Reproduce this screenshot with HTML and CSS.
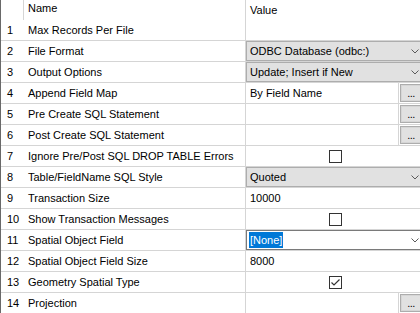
FILE: index.html
```html
<!DOCTYPE html>
<html lang="en">
<head>
    <meta charset="UTF-8">
    <title>Writer Parameters</title>
    <link rel="stylesheet" href="styles.css">
</head>
<body>
<div class="grid">
    <div class="row head">
        <div class="num"></div>
        <div class="name">Name</div>
        <div class="val"><span class="txt">Value</span></div>
    </div>

    <div class="row">
        <div class="num">1</div>
        <div class="name">Max Records Per File</div>
        <div class="val"></div>
    </div>
    <div class="row">
        <div class="num">2</div>
        <div class="name">File Format</div>
        <div class="val">
            <div class="combo"><span class="label">ODBC Database (odbc:)</span>
                <svg width="8" height="5" viewBox="0 0 8 5"><path d="M0.5 0.5 L4 4 L7.5 0.5" fill="none" stroke="#5a5a5a" stroke-width="1"/></svg>
            </div>
        </div>
    </div>
    <div class="row">
        <div class="num">3</div>
        <div class="name">Output Options</div>
        <div class="val">
            <div class="combo"><span class="label">Update; Insert if New</span>
                <svg width="8" height="5" viewBox="0 0 8 5"><path d="M0.5 0.5 L4 4 L7.5 0.5" fill="none" stroke="#5a5a5a" stroke-width="1"/></svg>
            </div>
        </div>
    </div>
    <div class="row">
        <div class="num">4</div>
        <div class="name">Append Field Map</div>
        <div class="val">
            <span class="txt edit">By Field Name</span>
            <div class="dots">...</div>
        </div>
    </div>
    <div class="row">
        <div class="num">5</div>
        <div class="name">Pre Create SQL Statement</div>
        <div class="val">
            <span class="txt edit"></span>
            <div class="dots">...</div>
        </div>
    </div>
    <div class="row">
        <div class="num">6</div>
        <div class="name">Post Create SQL Statement</div>
        <div class="val">
            <span class="txt edit"></span>
            <div class="dots">...</div>
        </div>
    </div>
    <div class="row">
        <div class="num">7</div>
        <div class="name">Ignore Pre/Post SQL DROP TABLE Errors</div>
        <div class="val center"><div class="chk"></div></div>
    </div>
    <div class="row">
        <div class="num">8</div>
        <div class="name">Table/FieldName SQL Style</div>
        <div class="val">
            <div class="combo"><span class="label">Quoted</span>
                <svg width="8" height="5" viewBox="0 0 8 5"><path d="M0.5 0.5 L4 4 L7.5 0.5" fill="none" stroke="#5a5a5a" stroke-width="1"/></svg>
            </div>
        </div>
    </div>
    <div class="row">
        <div class="num">9</div>
        <div class="name">Transaction Size</div>
        <div class="val"><span class="txt">10000</span></div>
    </div>
    <div class="row">
        <div class="num">10</div>
        <div class="name">Show Transaction Messages</div>
        <div class="val center"><div class="chk"></div></div>
    </div>
    <div class="row">
        <div class="num">11</div>
        <div class="name">Spatial Object Field</div>
        <div class="val">
            <div class="combo focus"><span class="label"><span class="sel">[None]</span></span>
                <svg width="8" height="5" viewBox="0 0 8 5"><path d="M0.5 0.5 L4 4 L7.5 0.5" fill="none" stroke="#5a5a5a" stroke-width="1"/></svg>
            </div>
        </div>
    </div>
    <div class="row">
        <div class="num">12</div>
        <div class="name">Spatial Object Field Size</div>
        <div class="val"><span class="txt">8000</span></div>
    </div>
    <div class="row">
        <div class="num">13</div>
        <div class="name">Geometry Spatial Type</div>
        <div class="val center">
            <div class="chk">
                <svg width="11" height="11" viewBox="0 0 11 11"><path d="M1.5 5.5 L4 8 L9.5 2.5" fill="none" stroke="#333" stroke-width="1.2"/></svg>
            </div>
        </div>
    </div>
    <div class="row">
        <div class="num">14</div>
        <div class="name">Projection</div>
        <div class="val">
            <span class="txt edit"></span>
            <div class="dots">...</div>
        </div>
    </div>
</div>
</body>
</html>
```

FILE: styles.css
```css
body {
    margin: 0;
    padding: 0;
    font-family: "Liberation Sans", Arial, sans-serif;
    font-size: 11px;
    color: #000000;
    background-color: #FFFFFF;
    overflow: hidden;
}

.grid {
    width: 424px;
    border-left: 1px solid #696969;
}

.row {
    display: flex;
    height: 20px;
    line-height: 20px;
    border-bottom: 1px solid #d5d5d5;
}

.row.head {
    border-bottom: none;
    line-height: 17px;
}

.num {
    width: 23px;
    box-sizing: border-box;
    padding-left: 6px;
}

.head .num {
    border-right: 1px solid #d5d5d5;
}

.name {
    width: 222px;
    box-sizing: border-box;
    padding-left: 4px;
    border-right: 1px solid #d5d5d5;
    white-space: nowrap;
    overflow: hidden;
}

.val {
    flex: 1;
    min-width: 0;
    display: flex;
    align-items: center;
}

.val.center {
    justify-content: center;
}

.txt {
    padding-left: 4px;
    white-space: nowrap;
}

.txt.edit {
    flex: 1;
    align-self: stretch;
    border-right: 1px solid #d5d5d5;
}

.combo {
    flex: 1;
    height: 20px;
    box-sizing: border-box;
    display: flex;
    align-items: center;
    padding-left: 3px;
    border: 1px solid #adadad;
    background-color: #e1e1e1;
}

.combo .label {
    flex: 1;
    line-height: 18px;
    white-space: nowrap;
}

.combo svg {
    margin-right: 5px;
}

.combo.focus {
    background-color: #FFFFFF;
    border-color: #7a7a7a;
    padding-left: 2px;
}

.sel {
    display: inline-block;
    padding: 0 1px;
    line-height: 16px;
    background-color: #0078d7;
    color: #FFFFFF;
}

.dots {
    width: 22px;
    height: 18px;
    margin: 1px 3px 1px 1px;
    box-sizing: border-box;
    border: 1px solid #adadad;
    box-shadow: inset 0 0 0 1px #d6d6d6;
    background-color: #e1e1e1;
    text-align: center;
    line-height: 16px;
    letter-spacing: -0.5px;
}

.chk {
    width: 13px;
    height: 13px;
    box-sizing: border-box;
    border: 1px solid #333333;
    background-color: #FFFFFF;
    display: flex;
}
```
